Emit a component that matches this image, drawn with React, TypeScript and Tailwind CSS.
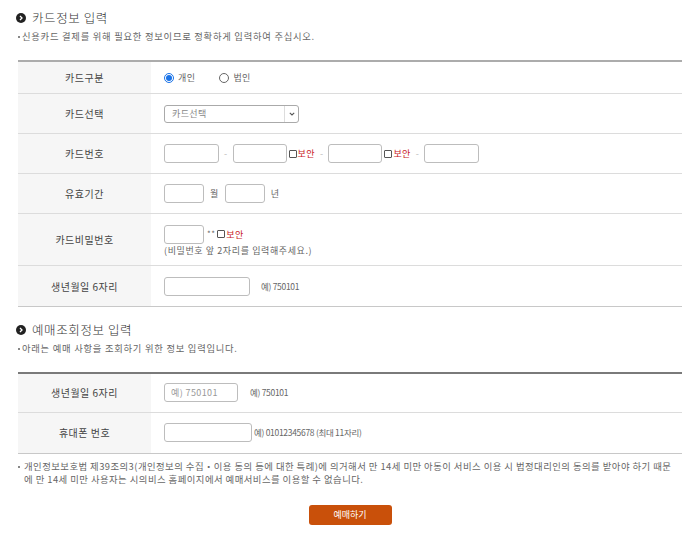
import React from "react";

const F = { fontFamily: '"Noto Sans CJK KR", "Noto Sans", sans-serif' };

function Heading({ title, sub }: { title: string; sub: string }) {
  return (
    <div>
      <div className="flex items-center h-[20px] pl-[16px]">
        <span className="w-[10px] h-[10px] rounded-full bg-[#222] flex items-center justify-center mr-[6px]">
          <svg width="6" height="6" viewBox="0 0 6 6">
            <path d="M2 1 L4 3 L2 5" stroke="#fff" strokeWidth="1.3" fill="none" />
          </svg>
        </span>
        <span className="text-[12.5px] text-[#333] leading-none font-light tracking-[0.6px]">{title}</span>
      </div>
      <div className="flex items-center pl-[18px] mt-[4px] text-[9.3px] text-[#666] leading-none tracking-[0.75px]">
        <span className="w-[2px] h-[2px] bg-[#888] mr-[2px]" />
        <span>{sub}</span>
      </div>
    </div>
  );
}

function Row({ label, h, children, last }: { label: string; h: string; children: React.ReactNode; last?: boolean }) {
  return (
    <div className={`flex ${h} ${last ? "" : "border-b border-[#dcdcdc]"}`}>
      <div className="w-[133px] shrink-0 bg-[#f6f6f6] flex items-center justify-center text-[10px] text-[#444] tracking-[0.5px]">{label}</div>
      <div className="flex-1 flex items-center pl-[13px] text-[9px] text-[#666] tracking-[0.4px]">{children}</div>
    </div>
  );
}

function Box({ w, children }: { w: string; children?: React.ReactNode }) {
  return (
    <div className={`${w} h-[19px] border border-[#bdbdbd] rounded-[3px] bg-white flex items-center pl-[6px] text-[9px] text-[#999]`}>
      {children}
    </div>
  );
}

function Check() {
  return <span className="inline-block w-[8px] h-[8px] border border-[#555] rounded-[1px] bg-white" />;
}

function Secure() {
  return (
    <span className="flex items-center gap-[1px]">
      <Check />
      <span className="text-[#c8161d] text-[9px]">보안</span>
    </span>
  );
}

function Dash() {
  return <span className="text-[#bbb] text-[9px] mx-[5px]">-</span>;
}

export default function App() {
  return (
    <div className="w-[700px] h-[533px] bg-white relative" style={F}>
      <div className="pt-[8px]">
        <Heading title="카드정보 입력" sub="신용카드 결제를 위해 필요한 정보이므로 정확하게 입력하여 주십시오." />
      </div>
      <div className="mx-[18px] mt-[19px] border-t-2 border-t-[#acacac] border-b border-b-[#c8c8c8]">
        <Row label="카드구분" h="h-[32px]">
          <span className="flex items-center gap-[4px]">
            <span className="w-[10px] h-[10px] rounded-full border border-[#1a73e8] flex items-center justify-center">
              <span className="w-[6px] h-[6px] rounded-full bg-[#1a73e8]" />
            </span>
            <span>개인</span>
          </span>
          <span className="flex items-center gap-[4px] ml-[24px]">
            <span className="w-[10px] h-[10px] rounded-full border border-[#666]" />
            <span>법인</span>
          </span>
        </Row>
        <Row label="카드선택" h="h-[40px]">
          <div className="w-[135px] h-[18px] border border-[#aaa] rounded-[3px] flex items-center text-[9px] text-[#888]">
            <span className="flex-1 pl-[7px]">카드선택</span>
            <span className="w-[14px] h-full border-l border-[#ddd] flex items-center justify-center">
              <svg width="6" height="4" viewBox="0 0 6 4"><path d="M0.8 0.8 L3 3 L5.2 0.8" stroke="#555" strokeWidth="1.1" fill="none" /></svg>
            </span>
          </div>
        </Row>
        <Row label="카드번호" h="h-[40px]">
          <Box w="w-[55px]" />
          <Dash />
          <Box w="w-[54px]" />
          <span className="ml-[2px]"><Secure /></span>
          <Dash />
          <Box w="w-[54px]" />
          <span className="ml-[2px]"><Secure /></span>
          <Dash />
          <Box w="w-[55px]" />
        </Row>
        <Row label="유효기간" h="h-[40px]">
          <Box w="w-[40px]" />
          <span className="mx-[6px]">월</span>
          <Box w="w-[40px]" />
          <span className="ml-[6px]">년</span>
        </Row>
        <Row label="카드비밀번호" h="h-[52px]">
          <div className="flex flex-col">
            <div className="flex items-center">
              <Box w="w-[40px]" />
              <span className="ml-[3px] mr-[2px] text-[8px]">**</span>
              <Secure />
            </div>
            <div className="mt-[2px] text-[9px] text-[#666] leading-none tracking-[0.6px]">(비밀번호 앞 2자리를 입력해주세요.)</div>
          </div>
        </Row>
        <Row label="생년월일 6자리" h="h-[40px]" last>
          <Box w="w-[86px]" />
          <span className="ml-[11px] text-[8.5px] tracking-[-0.3px]">예) 750101</span>
        </Row>
      </div>

      <div className="mt-[13px]">
        <Heading title="예매조회정보 입력" sub="아래는 예매 사항을 조회하기 위한 정보 입력입니다." />
      </div>
      <div className="mx-[18px] mt-[18px] border-t-2 border-t-[#7a7a7a] border-b border-b-[#c8c8c8]">
        <Row label="생년월일 6자리" h="h-[39px]">
          <Box w="w-[74px]">예) 750101</Box>
          <span className="ml-[12px] text-[8.5px] tracking-[-0.3px]">예) 750101</span>
        </Row>
        <Row label="휴대폰 번호" h="h-[40px]" last>
          <Box w="w-[88px]" />
          <span className="ml-[2px] text-[8.5px] tracking-[-0.3px]">예) 01012345678 (최대 11자리)</span>
        </Row>
      </div>

      <div className="flex mt-[6px] pl-[18px] text-[9.4px] text-[#666] leading-[13px] whitespace-nowrap tracking-[0.45px]">
        <span className="w-[2px] h-[2px] bg-[#888] mt-[6px] mr-[4px] shrink-0" />
        <div className="flex flex-col">
          <span>개인정보보호법 제39조의3(개인정보의 수집・이용 동의 등에 대한 특례)에 의거해서 만 14세 미만 아동이 서비스 이용 시 법정대리인의 동의를 받아야 하기 때문</span>
          <span>에 만 14세 미만 사용자는 시의비스 홈페이지에서 예매서비스를 이용할 수 없습니다.</span>
        </div>
      </div>

      <div className="flex justify-center mt-[19px]">
        <div className="w-[83px] h-[20px] bg-[#c9500a] rounded-[3px] flex items-center justify-center text-white text-[9px]">예매하기</div>
      </div>
    </div>
  );
}
